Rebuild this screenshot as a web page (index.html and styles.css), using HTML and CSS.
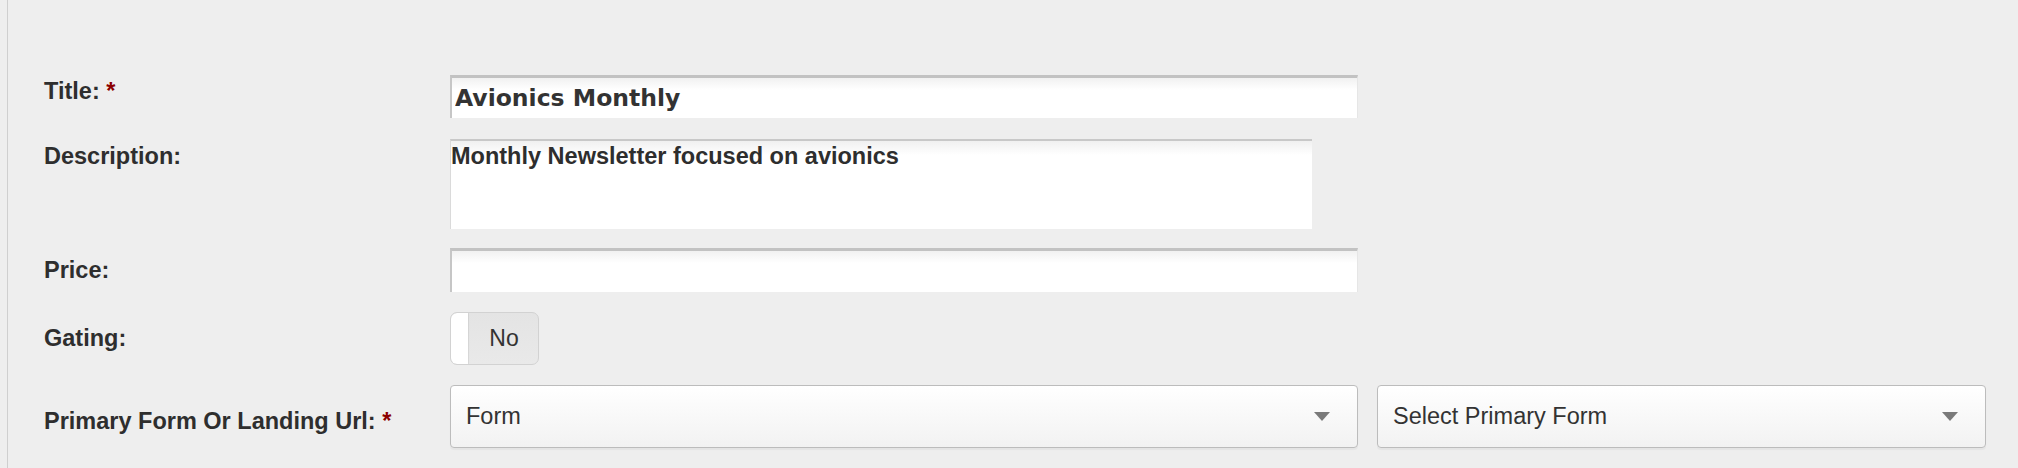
FILE: index.html
```html
<!DOCTYPE html>
<html lang="en">
<head>
    <meta charset="UTF-8">
    <meta name="viewport" content="width=device-width, initial-scale=1.0">
    <title>Edit Publication</title>
    <link rel="stylesheet" href="styles.css">
</head>
<body>
    <div class="panel">
        <form class="edit-form">
            <div class="field field-title">
                <label class="field-label" for="title">Title: <span class="req">*</span></label>
                <input type="text" id="title" class="text-input title-input" value="Avionics Monthly">
            </div>
            <div class="field field-desc">
                <label class="field-label" for="description">Description:</label>
                <textarea id="description" class="desc-input">Monthly Newsletter focused on avionics</textarea>
            </div>
            <div class="field field-price">
                <label class="field-label" for="price">Price:</label>
                <input type="text" id="price" class="text-input" value="">
            </div>
            <div class="field field-gating">
                <label class="field-label">Gating:</label>
                <div class="toggle">
                    <span class="toggle-knob"></span>
                    <span class="toggle-text">No</span>
                </div>
            </div>
            <div class="field field-primary">
                <label class="field-label">Primary Form Or Landing Url: <span class="req">*</span></label>
                <div class="select-row">
                    <div class="select select-type">
                        <span>Form</span>
                        <svg class="arrow" width="16" height="9" viewBox="0 0 16 9"><path d="M0 0H16L8 9Z" fill="#7a7a7a"/></svg>
                    </div>
                    <div class="select select-form">
                        <span>Select Primary Form</span>
                        <svg class="arrow" width="16" height="9" viewBox="0 0 16 9"><path d="M0 0H16L8 9Z" fill="#7a7a7a"/></svg>
                    </div>
                </div>
            </div>
        </form>
    </div>
</body>
</html>
```

FILE: styles.css
```css
body {
    margin: 0;
    background-color: #eeeeee;
    font-family: "Liberation Sans", Arial, Helvetica, sans-serif;
    color: #333;
}
.panel {
    margin-left: 7px;
    min-height: 468px;
    border-left: 1px solid #cfcfcf;
    padding: 75px 0 0 36px;
    box-sizing: border-box;
}
.field {
    display: grid;
    grid-template-columns: 406px 1fr;
    align-items: start;
    margin-bottom: 20px;
}
.field-label {
    font-size: 23.5px;
    font-weight: bold;
    line-height: 27px;
    color: #2e2e2e;
}
.req {
    color: #8b0000;
}
.field-title { margin-bottom: 21px; }
.field-desc { margin-bottom: 19px; }
.field-title .field-label { padding-top: 3px; }
.field-desc .field-label { padding-top: 4px; }
.field-price .field-label { padding-top: 9px; }
.field-gating .field-label { padding-top: 13px; }
.field-primary .field-label { padding-top: 23px; }

.text-input {
    width: 908px;
    height: 44px;
    box-sizing: border-box;
    margin: 0;
    padding: 0 3px;
    border-style: solid;
    border-width: 3px 1px 0 2px;
    border-color: #c2c2c2 #e6e6e6 #eee #c6c6c6;
    background: linear-gradient(#f1f1f1, #fff 12px);
    font-family: "DejaVu Sans", Verdana, sans-serif;
    font-size: 23.5px;
    font-weight: bold;
    color: #333;
    outline: none;
}
.title-input {
    height: 43px;
}
.desc-input {
    display: block;
    width: 862px;
    height: 90px;
    box-sizing: border-box;
    margin: 0;
    padding: 2px 0 0 0;
    border-style: solid;
    border-width: 2px 0 0 1px;
    border-color: #c8c8c8 #fff #fff #dadada;
    background: linear-gradient(#f0f0f0, #fff 14px);
    font-family: "Liberation Sans", Arial, sans-serif;
    font-size: 23.5px;
    font-weight: bold;
    color: #2e2e2e;
    resize: none;
    outline: none;
}
.toggle {
    display: flex;
    width: 89px;
    height: 53px;
    box-sizing: border-box;
    border: 1px solid #d2d2d2;
    border-radius: 7px;
    background: linear-gradient(#e4e4e4, #e9e9e9);
    overflow: hidden;
}
.toggle-knob {
    width: 17px;
    background: #fff;
    border-radius: 6px 0 0 6px;
    box-shadow: 1px 0 1px rgba(0, 0, 0, 0.08);
}
.toggle-text {
    flex: 1;
    display: flex;
    align-items: center;
    justify-content: center;
    padding-left: 2px;
    font-size: 23px;
    color: #333;
}
.select-row {
    display: flex;
    gap: 19px;
}
.select {
    display: flex;
    align-items: center;
    justify-content: space-between;
    height: 63px;
    box-sizing: border-box;
    padding: 0 27px 0 15px;
    border: 1px solid #bcbcbc;
    border-radius: 4px;
    background: linear-gradient(#ffffff, #f2f2f2);
    box-shadow: 0 2px 1px rgba(0, 0, 0, 0.04);
    font-size: 23.5px;
    color: #333;
}
.select-type {
    width: 908px;
}
.select-form {
    width: 609px;
}
.arrow {
    display: block;
}
```
